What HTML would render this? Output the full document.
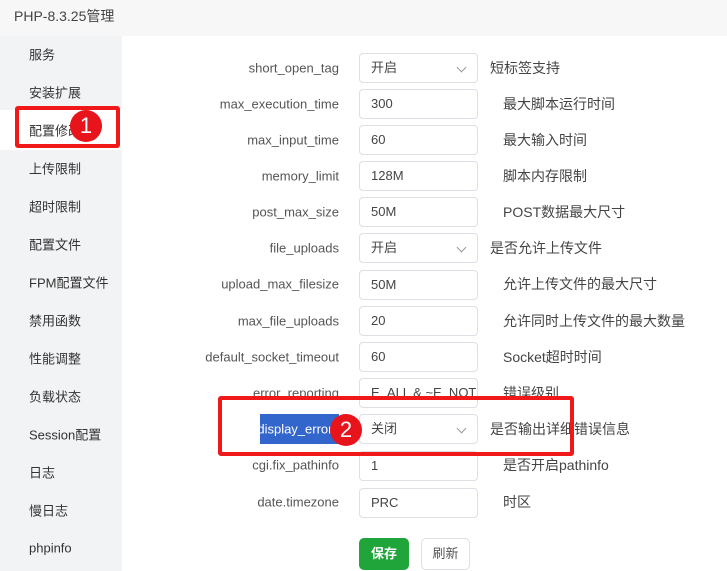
<!DOCTYPE html>
<html><head><meta charset="utf-8"><style>
body{margin:0;width:727px;height:571px;overflow:hidden;font-family:"Liberation Sans","Noto Sans CJK SC",sans-serif;background:#fff;position:relative;color:#333}
.hdr{position:absolute;left:0;top:0;width:727px;height:36px;background:#f7f7f7;font-size:14px;line-height:32px;color:#444;padding-left:14px;box-sizing:border-box}
.side{position:absolute;left:0;top:36px;width:122px;height:535px;background:#f2f3f5}
.si{position:absolute;left:29px;font-size:13px;color:#333;transform:translateY(-50%)}
.act{position:absolute;left:0;top:110px;width:122px;height:40px;background:#fff}
.lab{position:absolute;right:388px;font-size:13px;color:#555;transform:translateY(-50%)}
.inp{position:absolute;left:359px;width:119px;height:30px;border:1px solid #dcdfe6;border-radius:4px;box-sizing:border-box;font-size:13px;line-height:28px;padding-left:11px;color:#444;background:#fff;transform:translateY(-50%)}
.chev{position:absolute;right:12px;top:10px;width:6px;height:6px;border-right:1px solid #999;border-bottom:1px solid #999;transform:rotate(45deg)}
.d{position:absolute;font-size:14px;color:#444;transform:translateY(-50%)}
.rb{position:absolute;border:4px solid #f01818;border-radius:3px;box-sizing:border-box}
.circ{position:absolute;width:32px;height:32px;border-radius:50%;background:#e8141b;color:#fff;font-size:22px;line-height:32px;text-align:center}
</style></head><body>
<div class="hdr">PHP-8.3.25管理</div>
<div class="side"></div>
<div class="act"></div>
<div class="si" style="top:54px">服务</div>
<div class="si" style="top:92px">安装扩展</div>
<div class="si" style="top:130px">配置修改</div>
<div class="si" style="top:168px">上传限制</div>
<div class="si" style="top:206px">超时限制</div>
<div class="si" style="top:244px">配置文件</div>
<div class="si" style="top:282px">FPM配置文件</div>
<div class="si" style="top:320px">禁用函数</div>
<div class="si" style="top:358px">性能调整</div>
<div class="si" style="top:396px">负载状态</div>
<div class="si" style="top:434px">Session配置</div>
<div class="si" style="top:472px">日志</div>
<div class="si" style="top:510px">慢日志</div>
<div class="si" style="top:548px">phpinfo</div>

<div class="lab" style="top:68px">short_open_tag</div><div class="inp" style="top:68px">开启<i class="chev"></i></div><div class="d" style="left:490px;top:68px">短标签支持</div>
<div class="lab" style="top:104px">max_execution_time</div><div class="inp" style="top:104px">300</div><div class="d" style="left:503px;top:104px">最大脚本运行时间</div>
<div class="lab" style="top:140px">max_input_time</div><div class="inp" style="top:140px">60</div><div class="d" style="left:503px;top:140px">最大输入时间</div>
<div class="lab" style="top:176px">memory_limit</div><div class="inp" style="top:176px">128M</div><div class="d" style="left:503px;top:176px">脚本内存限制</div>
<div class="lab" style="top:212px">post_max_size</div><div class="inp" style="top:212px">50M</div><div class="d" style="left:503px;top:212px">POST数据最大尺寸</div>
<div class="lab" style="top:248px">file_uploads</div><div class="inp" style="top:248px">开启<i class="chev"></i></div><div class="d" style="left:490px;top:248px">是否允许上传文件</div>
<div class="lab" style="top:284px">upload_max_filesize</div><div class="inp" style="top:285px">50M</div><div class="d" style="left:503px;top:284px">允许上传文件的最大尺寸</div>
<div class="lab" style="top:321px">max_file_uploads</div><div class="inp" style="top:321px">20</div><div class="d" style="left:503px;top:321px">允许同时上传文件的最大数量</div>
<div class="lab" style="top:357px">default_socket_timeout</div><div class="inp" style="top:357px">60</div><div class="d" style="left:503px;top:357px">Socket超时时间</div>
<div class="lab" style="top:393px">error_reporting</div><div class="inp" style="top:393px;overflow:hidden;white-space:nowrap">E_ALL &amp; ~E_NOT</div><div class="d" style="left:503px;top:393px">错误级别</div>
<div style="position:absolute;left:260px;top:414px;width:79px;height:30px;background:#3366cc"></div>
<div class="lab" style="top:429px;color:#fff">display_errors</div><div class="inp" style="top:429px">关闭<i class="chev"></i></div><div class="d" style="left:490px;top:429px">是否输出详细错误信息</div>
<div class="lab" style="top:465px">cgi.fix_pathinfo</div><div class="inp" style="top:466px">1</div><div class="d" style="left:503px;top:465px">是否开启pathinfo</div>
<div class="lab" style="top:502px">date.timezone</div><div class="inp" style="top:503px">PRC</div><div class="d" style="left:503px;top:502px">时区</div>
<div style="position:absolute;left:359px;top:538px;width:50px;height:32px;background:#20a53a;border-radius:5px;color:#fff;font-size:13px;font-weight:bold;line-height:32px;text-align:center">保存</div>
<div style="position:absolute;left:421px;top:538px;width:49px;height:32px;border:1px solid #dcdfe6;box-sizing:border-box;border-radius:5px;color:#555;font-size:13px;line-height:30px;text-align:center">刷新</div>

<div class="rb" style="left:15px;top:106px;width:105px;height:42px"></div>
<div class="circ" style="left:70px;top:110px">1</div>
<div class="rb" style="left:218px;top:396px;width:356px;height:60px"></div>
<div class="circ" style="left:330px;top:414px">2</div>
</body></html>
